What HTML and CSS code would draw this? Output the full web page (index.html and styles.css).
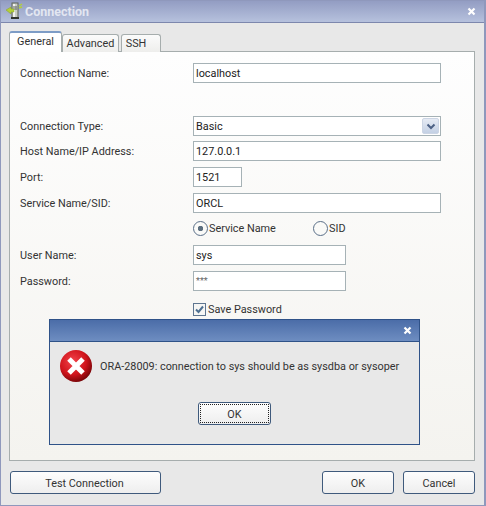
FILE: index.html
```html
<!DOCTYPE html>
<html lang="en">
<head>
    <meta charset="UTF-8">
    <title>Connection</title>
    <link rel="stylesheet" href="styles.css">
</head>
<body>
<div class="window">
    <div class="titlebar">
        <svg class="app-icon" width="20" height="20" viewBox="0 0 20 20">
            <rect x="8" y="2" width="6" height="15" fill="#c9ccc4" stroke="#5c6258" stroke-width="1"/>
            <rect x="9" y="3" width="2" height="13" fill="#f2f3ee"/>
            <path d="M9 6h4M9 8h4" stroke="#596056"/>
            <path d="M2 9l5 -3v2h3v3H7v2z" fill="#b3cf3a" stroke="#8aa02a" stroke-width=".5"/>
            <path d="M15 5l3 -2M15 7l3 -1" stroke="#b3cf3a" stroke-width="1.5"/>
            <path d="M7 17h8" stroke="#30342e" stroke-width="2"/>
        </svg>
        <span class="title-text">Connection</span>
        <svg class="close" width="9" height="9" viewBox="0 0 9 9">
            <path d="M1.5 1.5l6 6M7.5 1.5l-6 6" stroke="#fff" stroke-width="2.2"/>
        </svg>
    </div>
    <div class="content">
        <div class="tabs">
            <div class="tab active">General</div>
            <div class="tab tab-advanced">Advanced</div>
            <div class="tab tab-ssh">SSH</div>
        </div>
        <div class="panel">
            <div class="row">
                <span class="label">Connection Name:</span>
                <div class="field">localhost</div>
            </div>
            <div class="row gap-large">
                <span class="label">Connection Type:</span>
                <div class="field select">Basic
                    <span class="drop">
                        <svg width="10" height="7" viewBox="0 0 10 7"><path d="M1.5 1.5L5 5l3.5-3.5" fill="none" stroke="#4d6185" stroke-width="2"/></svg>
                    </span>
                </div>
            </div>
            <div class="row gap-5">
                <span class="label">Host Name/IP Address:</span>
                <div class="field">127.0.0.1</div>
            </div>
            <div class="row gap-6">
                <span class="label">Port:</span>
                <div class="field port">1521</div>
            </div>
            <div class="row gap-6">
                <span class="label">Service Name/SID:</span>
                <div class="field">ORCL</div>
            </div>
            <div class="row options">
                <span></span>
                <div class="radios">
                    <label class="radio on">Service Name</label>
                    <label class="radio">SID</label>
                </div>
            </div>
            <div class="row gap-6">
                <span class="label">User Name:</span>
                <div class="field short">sys</div>
            </div>
            <div class="row gap-6">
                <span class="label">Password:</span>
                <div class="field short stars">***</div>
            </div>
            <div class="row save">
                <span></span>
                <label class="check">
                    <svg width="13" height="13" viewBox="0 0 13 13"><rect x=".5" y=".5" width="12" height="12" fill="#f6f6f4" stroke="#5f7690"/><path d="M3 6.5l2.500 2.500L10 3.500" fill="none" stroke="#4d6f90" stroke-width="2"/></svg>
                    Save Password
                </label>
            </div>
        </div>
        <div class="footer">
            <div class="btn btn-test">Test Connection</div>
            <div class="footer-right">
                <div class="btn">OK</div>
                <div class="btn">Cancel</div>
            </div>
        </div>
    </div>
</div>

<div class="dialog">
    <div class="dialog-title">
        <svg width="9" height="9" viewBox="0 0 9 9">
            <path d="M1.500 1.500l6 6M7.500 1.500l-6 6" stroke="#fff" stroke-width="2.200"/>
        </svg>
    </div>
    <div class="dialog-body">
        <div class="message">
            <svg width="34" height="34" viewBox="0 0 34 34">
                <defs>
                    <radialGradient id="red" cx="40%" cy="35%" r="70%">
                        <stop offset="0" stop-color="#f2434a"/>
                        <stop offset=".6" stop-color="#d0141c"/>
                        <stop offset="1" stop-color="#6d0306"/>
                    </radialGradient>
                </defs>
                <circle cx="17" cy="17" r="16" fill="url(#red)"/>
                <path d="M10 10l14 14M24 10L10 24" stroke="#fff" stroke-width="5"/>
            </svg>
            <span>ORA-28009: connection to sys should be as sysdba or sysoper</span>
        </div>
        <div class="btn btn-focus"><span>OK</span></div>
    </div>
</div>
</body>
</html>
```

FILE: styles.css
```css
* {
    margin: 0;
    padding: 0;
    box-sizing: border-box;
}

body {
    width: 486px;
    height: 506px;
    position: relative;
    overflow: hidden;
    font-family: Roboto, "Liberation Sans", sans-serif;
    font-size: 10.85px;
    color: #333;
    background: #e8e8e8;
}

.window {
    width: 486px;
    height: 506px;
    display: flex;
    flex-direction: column;
    border: 1px solid #8f98bc;
    border-right-width: 2px;
}

.titlebar {
    height: 22px;
    flex: none;
    display: flex;
    align-items: center;
    padding: 0 8px 0 3px;
    background: linear-gradient(#939dc3, #b6c1dd);
    border-bottom: 1px solid #7d87ad;
}

.app-icon {
    flex: none;
    margin-top: -2px;
}

.title-text {
    flex: 1;
    margin-left: 1px;
    font-size: 12.5px;
    font-weight: bold;
    color: #e2e6f1;
}

.content {
    flex: 1;
    display: flex;
    flex-direction: column;
    padding: 8px 9px 0 8px;
    background: #e8e8e8;
}

.tabs {
    height: 21px;
    flex: none;
    display: flex;
    align-items: flex-end;
    margin-bottom: -1px;
    position: relative;
    z-index: 1;
}

.tab {
    height: 18px;
    width: 57px;
    padding-top: 2px;
    text-align: center;
    background: linear-gradient(#fbfbfb, #eeeeec);
    border: 1px solid #a6adad;
    border-bottom: none;
    border-radius: 3px 3px 0 0;
}

.tab.active {
    width: 53px;
    height: 21px;
    padding-top: 2px;
    background: #fff;
    border-color: #a6adad;
    border-top: 2px solid #7d9cc6;
}

.tab-ssh {
    width: 40px;
    margin-left: 2px;
    padding-right: 10px;
}

.panel {
    height: 410px;
    flex: none;
    padding: 11px 0 0 10px;
    background: linear-gradient(#fefefe, #f4f3ef);
    border: 1px solid #a6adad;
}

.row {
    height: 20px;
    display: grid;
    grid-template-columns: 173px auto;
    justify-content: start;
    align-items: center;
}

.label {
    padding-top: 1px;
}

.gap-large {
    margin-top: 33px;
}

.gap-5 {
    margin-top: 5px;
}

.gap-6 {
    margin-top: 6px;
}

.field {
    width: 248px;
    height: 20px;
    padding-left: 2px;
    line-height: 19px;
    color: #222;
    background: #fff;
    border: 1px solid #a6b2b6;
}

.port {
    width: 49px;
}

.short {
    width: 153px;
}

.stars {
    font-size: 9px;
    color: #666;
}

.select {
    display: flex;
    justify-content: space-between;
}

.drop {
    width: 17px;
    height: 16px;
    margin: 1px;
    display: flex;
    align-items: center;
    justify-content: center;
    background: linear-gradient(#e6ebf4, #c3d0e4);
    border: 1px solid #ccd5e4;
    border-radius: 2px;
}

.options {
    height: 20px;
    margin-top: 5px;
}

.options + .row {
    margin-top: 7px;
}

.radios {
    display: flex;
}

.radio {
    width: 120px;
    display: flex;
    align-items: center;
    gap: 1px;
}

.radio::before {
    content: "";
    width: 13px;
    height: 13px;
    border: 1px solid #5a6f88;
    border-radius: 50%;
    background: #fafaf8;
}

.radio.on::before {
    background: radial-gradient(circle, #5c6f80 0 2.500px, #fafaf8 3px);
}

.save {
    margin-top: 8px;
}

.check {
    display: flex;
    align-items: center;
    gap: 2px;
}

.footer {
    flex: 1;
    display: flex;
    justify-content: space-between;
    padding: 10px 0 0 1px;
}

.footer-right {
    display: flex;
    gap: 9px;
}

.btn {
    width: 72px;
    height: 23px;
    line-height: 23px;
    text-align: center;
    background: linear-gradient(#fdfdfd, #eeeeee);
    border: 1px solid #3f5a7c;
    border-radius: 3px;
}

.btn-test {
    width: 151px;
    padding-right: 2px;
}

/* error box sits over the connection window */
.dialog {
    position: absolute;
    left: 49px;
    top: 319px;
    width: 371px;
    height: 126px;
    display: flex;
    flex-direction: column;
    background: #e8e8e8;
    border: 1px solid #2f5288;
}

.dialog-title {
    height: 22px;
    flex: none;
    display: flex;
    align-items: center;
    justify-content: flex-end;
    padding-right: 7px;
    background: linear-gradient(#4b6da8, #6e8dc1);
    border-bottom: 1px solid #2f5288;
}

.dialog-body {
    flex: 1;
    display: flex;
    flex-direction: column;
    align-items: center;
}

.message {
    width: 100%;
    display: flex;
    align-items: center;
    gap: 7px;
    padding: 7px 0 0 9px;
}

.btn-focus {
    width: 73px;
    margin-top: 19px;
    padding: 1px;
    line-height: 19px;
}

.btn-focus span {
    display: block;
    height: 19px;
    border: 1px dotted #222;
}
```
